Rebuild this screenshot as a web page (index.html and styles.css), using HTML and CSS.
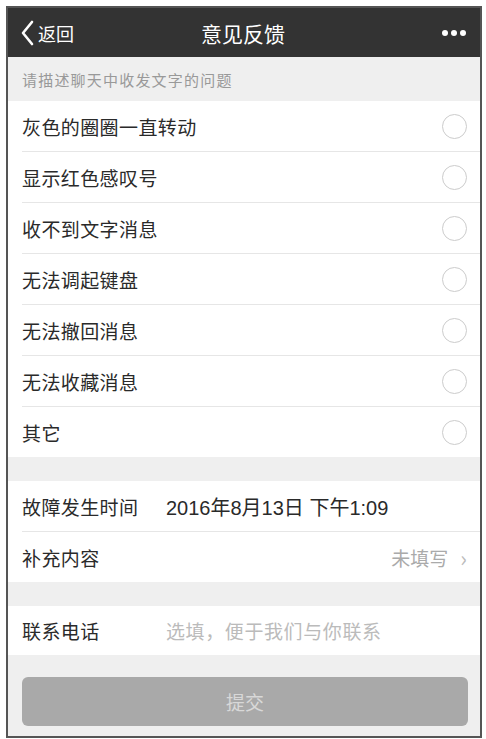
FILE: index.html
```html
<!DOCTYPE html>
<html lang="zh-CN">
<head>
    <meta charset="UTF-8">
    <meta name="viewport" content="width=device-width, initial-scale=1.0">
    <title>意见反馈</title>
    <link rel="stylesheet" href="styles.css">
</head>
<body>
    <div class="phone">
        <div class="navbar">
            <div class="nav-back">
                <svg class="back-icon" width="15" height="26" viewBox="0 0 15 26">
                    <path d="M12 2 L3 13 L12 24" fill="none" stroke="#fff" stroke-width="2.6" stroke-linecap="round" stroke-linejoin="round"/>
                </svg>
                <span>返回</span>
            </div>
            <div class="nav-title">意见反馈</div>
            <div class="nav-more">
                <span class="dot"></span><span class="dot"></span><span class="dot"></span>
            </div>
        </div>

        <div class="section-title">请描述聊天中收发文字的问题</div>

        <div class="group">
            <div class="row"><span class="label">灰色的圈圈一直转动</span><span class="radio"></span></div>
            <div class="row"><span class="label">显示红色感叹号</span><span class="radio"></span></div>
            <div class="row"><span class="label">收不到文字消息</span><span class="radio"></span></div>
            <div class="row"><span class="label">无法调起键盘</span><span class="radio"></span></div>
            <div class="row"><span class="label">无法撤回消息</span><span class="radio"></span></div>
            <div class="row"><span class="label">无法收藏消息</span><span class="radio"></span></div>
            <div class="row"><span class="label">其它</span><span class="radio"></span></div>
        </div>

        <div class="group spaced">
            <div class="row field">
                <span class="label field-label">故障发生时间</span>
                <span class="value">2016年8月13日 下午1:09</span>
            </div>
            <div class="row field">
                <span class="label">补充内容</span>
                <span class="extra">未填写<span class="arrow">&#x203A;</span></span>
            </div>
        </div>

        <div class="group spaced">
            <div class="row field phone-row">
                <span class="label field-label">联系电话</span>
                <span class="placeholder">选填，便于我们与你联系</span>
            </div>
        </div>

        <div class="actions">
            <button class="submit" disabled>提交</button>
        </div>
    </div>
</body>
</html>
```

FILE: styles.css
```css
body {
    margin: 0;
    background: #fff;
    font-family: "Noto Sans CJK SC", "Liberation Sans", sans-serif;
}
.phone {
    width: 472px;
    height: 728px;
    margin: 6px 0 0 6px;
    border: 2px solid #555;
    background: #efefef;
    overflow: hidden;
}
.navbar {
    height: 49px;
    background: #333;
    color: #fff;
    display: flex;
    align-items: center;
    justify-content: space-between;
    padding: 0 14px 0 12px;
}
.nav-back {
    display: flex;
    align-items: center;
    gap: 3px;
    font-size: 18px;
    width: 100px;
}
.nav-title {
    font-size: 21px;
}
.nav-more {
    width: 100px;
    display: flex;
    justify-content: flex-end;
    gap: 3px;
}
.dot {
    width: 6px;
    height: 6px;
    border-radius: 50%;
    background: #fff;
}
.section-title {
    height: 44px;
    line-height: 46px;
    padding-left: 14px;
    font-size: 15px;
    color: #999;
    letter-spacing: 1.2px;
}
.group {
    background: #fff;
}
.group.spaced {
    margin-top: 24px;
}
.row {
    height: 50px;
    display: flex;
    align-items: center;
    justify-content: space-between;
    margin-left: 14px;
    padding-right: 13px;
    border-top: 1px solid #e6e6e6;
}
.row:first-child {
    border-top: none;
}
.label {
    font-size: 19px;
    letter-spacing: 0.4px;
    color: #2a2a2a;
}
.radio {
    width: 23px;
    height: 23px;
    border: 1px solid #ccc;
    border-radius: 50%;
}
.field {
    justify-content: flex-start;
}
.field-label {
    width: 144px;
}
.value {
    font-family: "Liberation Sans", "Noto Sans CJK SC", sans-serif;
    font-size: 20px;
    color: #2a2a2a;
}
.extra {
    margin-left: auto;
    font-size: 19px;
    color: #aaa;
    display: flex;
    align-items: center;
}
.arrow {
    margin-left: 12px;
    font-size: 22px;
    color: #bbb;
}
.phone-row {
    height: 49px;
}
.placeholder {
    font-size: 19px;
    letter-spacing: 0.6px;
    color: #bbb;
}
.actions {
    padding: 22px 12px 0 14px;
}
.submit {
    width: 100%;
    height: 49px;
    border: none;
    border-radius: 6px;
    background: #a9a9a9;
    color: #d8d8d8;
    font-family: inherit;
    font-size: 19px;
}
```
